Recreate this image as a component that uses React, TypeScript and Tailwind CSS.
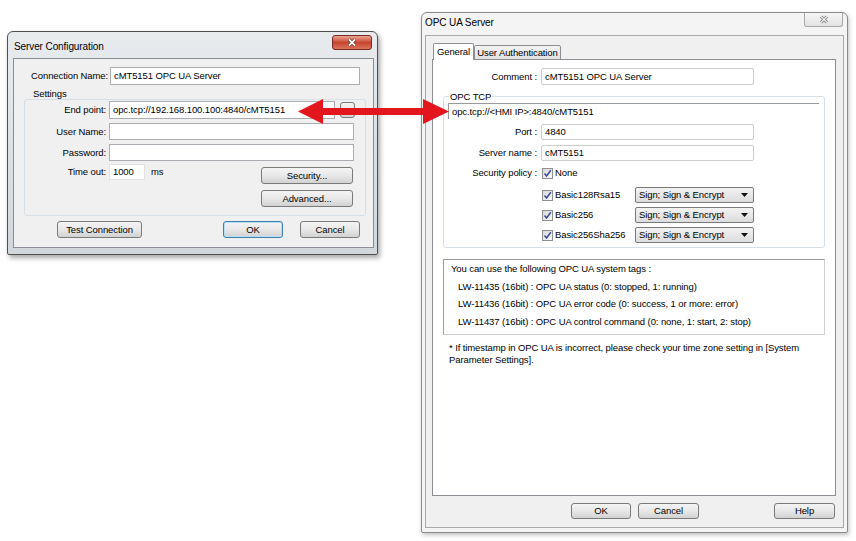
import React from 'react';

type Box = { className?: string; children?: React.ReactNode };

const WinButton = ({ className = '', children, focused = false }: Box & { focused?: boolean }) => (
  <div
    className={`flex items-center justify-center rounded-[3px] border bg-linear-to-b from-[#f4f4f4] via-[#e8e8e8] to-[#d2d2d2] text-[9.5px] leading-none text-black ${
      focused ? 'border-[#3c7fb1] shadow-[inset_0_0_0_1px_#b6e0f5]' : 'border-[#7a7a7a]'
    } ${className}`}
  >
    {children}
  </div>
);

const Input = ({ className = '', children }: Box) => (
  <div className={`flex items-center bg-white pl-[3px] text-[9.5px] leading-none text-black ${className}`}>{children}</div>
);

const CheckBox = () => (
  <div className="flex h-[11px] w-[11px] items-center justify-center border border-[#8e8f8f] bg-linear-to-br from-[#d8d8d8] to-[#fbfbfb]">
    <svg width="9" height="9" viewBox="0 0 9 9">
      <path d="M1.5 4.5 L3.6 7 L7.8 1.2" fill="none" stroke="#3b4a9a" strokeWidth="1.5" />
    </svg>
  </div>
);

const Dropdown = () => (
  <div className="flex h-[16px] w-[119px] items-center justify-between rounded-[2px] border border-[#7a7a7a] bg-linear-to-b from-[#f3f3f3] to-[#dcdcdc] pl-[3px] pr-[5px] text-[9.5px] leading-none text-black">
    <span>Sign; Sign &amp; Encrypt</span>
    <svg width="7" height="4" viewBox="0 0 7 4">
      <path d="M0 0 H7 L3.5 4 Z" fill="#111" />
    </svg>
  </div>
);

const LeftRow = ({ label, children }: { label: string; children?: React.ReactNode }) => (
  <div className="flex items-center">
    <span className="w-[81px] text-right">{label}</span>
    <div className="ml-[3px] flex items-center">{children}</div>
  </div>
);

const RightRow = ({ label, children, className = '' }: { label: string; children?: React.ReactNode; className?: string }) => (
  <div className={`flex items-center ${className}`}>
    <span className="w-[93px] text-right">{label}</span>
    <div className="ml-[4px] flex items-center">{children}</div>
  </div>
);

const PolicyRow = ({ name }: { name: string }) => (
  <div className="mt-[4px] flex h-[16px] items-center first:mt-[8px]">
    <div className="ml-[98px] flex w-[93px] items-center gap-[2px]">
      <CheckBox />
      <span>{name}</span>
    </div>
    <Dropdown />
  </div>
);

export default function App() {
  return (
    <div className="relative h-[541px] w-[856px] overflow-hidden bg-white font-['Liberation_Sans',Arial,sans-serif] text-[9.5px] tracking-[-0.1px] text-black">
      {/* Server Configuration dialog */}
      <div className="absolute left-[7px] top-[31px] flex h-[224px] w-[371px] flex-col rounded-t-[6px] rounded-b-[2px] border border-[#4f4f4f] bg-linear-to-b from-[#e8ebee] to-[#d2d7dd] pb-[6px] pl-[5px] pr-[3px] shadow-[2px_3px_5px_rgba(0,0,0,0.35)]">
        <div className="flex h-[26px] items-start justify-between">
          <span className="pl-[1px] pt-[9px] text-[10px] leading-[12px]">Server Configuration</span>
          <div className="mr-[2px] mt-[3px] flex h-[15px] w-[40px] items-center justify-center rounded-[3px] border border-[#7b2a1f] bg-linear-to-b from-[#e9a493] via-[#c8452f] to-[#d9725a]">
            <svg width="10" height="9" viewBox="0 0 10 9">
              <path d="M2 1.5 L8 7.5 M8 1.5 L2 7.5" stroke="#4a1410" strokeWidth="3" />
              <path d="M2 1.5 L8 7.5 M8 1.5 L2 7.5" stroke="#ffffff" strokeWidth="1.8" />
            </svg>
          </div>
        </div>
        <div className="flex flex-1 flex-col border border-[#8a8e94] bg-[#f0f0f0] px-[10px] pt-[8px] leading-none">
          <div className="flex items-center">
            <span className="w-[86px] pl-[7px]">Connection Name:</span>
            <Input className="h-[18px] w-[250px] border border-[#abadb3]">cMT5151 OPC UA Server</Input>
          </div>
          <span className="mt-[4px] h-[10px] pl-[9px] leading-[10px]">Settings</span>
          <div className="flex w-[342px] flex-col rounded-[3px] border border-[#d5dfe5] pb-[8px] pt-[1px]">
            <LeftRow label="End point:">
              <Input className="h-[18px] w-[226px] border border-[#abadb3]">opc.tcp://192.168.100.100:4840/cMT5151</Input>
              <WinButton className="ml-[5px] h-[16px] w-[15px]" />
            </LeftRow>
            <div className="mt-[4px]">
              <LeftRow label="User Name:">
                <Input className="h-[17px] w-[245px] border border-[#abadb3]" />
              </LeftRow>
            </div>
            <div className="mt-[4px]">
              <LeftRow label="Password:">
                <Input className="h-[17px] w-[245px] border border-[#abadb3]" />
              </LeftRow>
            </div>
            <div className="mt-[3px] flex items-start">
              <LeftRow label="Time out:">
                <Input className="h-[16px] w-[36px] border border-[#e3e3e3]">1000</Input>
                <span className="ml-[6px]">ms</span>
              </LeftRow>
              <WinButton className="ml-auto mr-[12px] mt-[3px] h-[17px] w-[92px]">Security...</WinButton>
            </div>
            <div className="mt-[6px] flex justify-end">
              <WinButton className="mr-[12px] h-[17px] w-[92px]">Advanced...</WinButton>
            </div>
          </div>
          <div className="mt-[5px] flex">
            <WinButton className="ml-[33px] h-[17px] w-[85px]">Test Connection</WinButton>
            <WinButton focused className="ml-[81px] h-[17px] w-[60px]">OK</WinButton>
            <WinButton className="ml-[17px] h-[17px] w-[60px]">Cancel</WinButton>
          </div>
        </div>
      </div>

      {/* OPC UA Server dialog */}
      <div className="absolute left-[421px] top-[12px] flex h-[521px] w-[427px] flex-col rounded-t-[6px] rounded-b-[2px] border border-[#8b8b8b] bg-[#f4f4f4] px-[3px] pb-[4px] shadow-[1px_2px_4px_rgba(0,0,0,0.25)]">
        <div className="flex h-[22px] items-start justify-between">
          <span className="pt-[4px] text-[10px] leading-[12px]">OPC UA Server</span>
          <div className="mr-[1px] flex h-[14px] w-[39px] items-center justify-center rounded-b-[3px] border border-t-0 border-[#a8a8a8] bg-linear-to-b from-[#f6f6f6] to-[#e3e3e3]">
            <svg width="10" height="9" viewBox="0 0 10 9">
              <path d="M2 1.5 L8 7.5 M8 1.5 L2 7.5" stroke="#7c7c7c" strokeWidth="3" />
              <path d="M2 1.5 L8 7.5 M8 1.5 L2 7.5" stroke="#f2f2f2" strokeWidth="1.2" />
            </svg>
          </div>
        </div>
        <div className="flex flex-1 flex-col border border-[#a9a9a9] bg-[#f0f0f0] leading-none">
          <div className="relative z-10 -mb-px ml-[7px] mt-[7px] flex items-end">
            <div className="flex h-[17px] w-[41px] items-center justify-center rounded-t-[2px] border border-b-0 border-[#8c8e94] bg-white">General</div>
            <div className="flex h-[15px] w-[87px] items-center justify-center rounded-t-[2px] border border-[#8c8e94] bg-linear-to-b from-[#f3f3f3] to-[#e2e2e2]">User Authentication</div>
          </div>
          <div className="ml-[6px] mr-[7px] flex h-[437px] flex-col border border-[#8c8e94] bg-white">
            <div className="mt-[8px] flex items-center">
              <span className="w-[104px] text-right">Comment :</span>
              <Input className="ml-[4px] h-[17px] w-[213px] rounded-[2px] border border-[#cccccc]">cMT5151 OPC UA Server</Input>
            </div>
            <fieldset className="mx-[10px] mt-[6px] rounded-[3px] border border-[#d5dfe5] pb-[4px]">
              <legend className="ml-[5px] px-[1px] leading-[11px]">OPC TCP</legend>
              <div className="ml-[4px] mr-[5px] mt-[1px] flex h-[16px] items-center border-l border-t border-[#9a9a9a] pl-[3px]">
                opc.tcp://&lt;HMI IP&gt;:4840/cMT5151
              </div>
              <RightRow label="Port :" className="mt-[5px]">
                <Input className="h-[16px] w-[213px] rounded-[2px] border border-[#cccccc]">4840</Input>
              </RightRow>
              <RightRow label="Server name :" className="mt-[5px]">
                <Input className="h-[16px] w-[213px] rounded-[2px] border border-[#cccccc]">cMT5151</Input>
              </RightRow>
              <div className="mt-[6px] flex h-[12px] items-center">
                <span className="w-[93px] text-right">Security policy :</span>
                <div className="ml-[5px] flex items-center gap-[2px]">
                  <CheckBox />
                  <span>None</span>
                </div>
              </div>
              <div className="flex flex-col">
                <PolicyRow name="Basic128Rsa15" />
                <PolicyRow name="Basic256" />
                <PolicyRow name="Basic256Sha256" />
              </div>
            </fieldset>
            <div className="mx-[10px] mt-[11px] flex flex-col border border-[#9c9c9c] border-r-[#d0d0d0] border-b-[#d0d0d0] bg-white pb-[6px] pl-[7px] pt-[3px] leading-[12px]">
              <span className="h-[12px]">You can use the following OPC UA system tags :</span>
              <span className="ml-[7px] mt-[6px] h-[12px]">LW-11435 (16bit) : OPC UA status (0: stopped, 1: running)</span>
              <span className="ml-[7px] mt-[5px] h-[12px]">LW-11436 (16bit) : OPC UA error code (0: success, 1 or more: error)</span>
              <span className="ml-[7px] mt-[6px] h-[12px]">LW-11437 (16bit) : OPC UA control command (0: none, 1: start, 2: stop)</span>
            </div>
            <p className="ml-[16px] mt-[7px] whitespace-nowrap leading-[12px]">
              * If timestamp in OPC UA is incorrect, please check your time zone setting in [System
              <br />
              Parameter Settings].
            </p>
          </div>
          <div className="mt-[7px] flex">
            <WinButton className="ml-[145px] h-[16px] w-[60px]">OK</WinButton>
            <WinButton className="ml-[7px] h-[16px] w-[61px]">Cancel</WinButton>
            <WinButton className="ml-[75px] h-[16px] w-[61px]">Help</WinButton>
          </div>
        </div>
      </div>

      {/* red double-headed arrow */}
      <svg className="absolute left-[296px] top-[98px] z-20" width="156" height="28" viewBox="0 0 156 28">
        <path d="M2 13.5 L27 1 L27 10 L127 10 L127 1 L153 13.5 L127 26 L127 17 L27 17 L27 26 Z" fill="#e3161d" />
      </svg>
    </div>
  );
}
